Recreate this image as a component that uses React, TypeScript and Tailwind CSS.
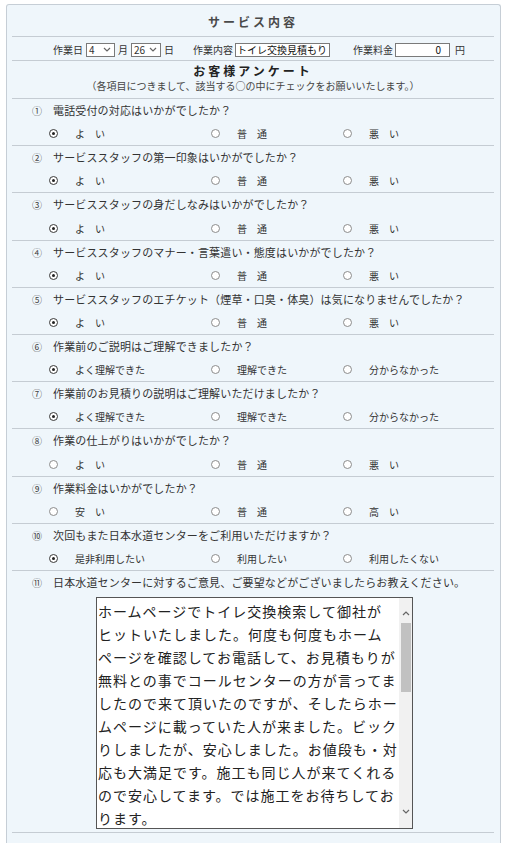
import React from "react";

type Q = {
  no: string;
  q: string;
  opts: string[];
  sel: number;
  tall?: boolean;
};

const yoi = ["よ　い", "普　通", "悪　い"];
const rikai = ["よく理解できた", "理解できた", "分からなかった"];

const questions: Q[] = [
  { no: "①", q: "電話受付の対応はいかがでしたか？", opts: yoi, sel: 0 },
  { no: "②", q: "サービススタッフの第一印象はいかがでしたか？", opts: yoi, sel: 0 },
  { no: "③", q: "サービススタッフの身だしなみはいかがでしたか？", opts: yoi, sel: 0, tall: true },
  { no: "④", q: "サービススタッフのマナー・言葉遣い・態度はいかがでしたか？", opts: yoi, sel: 0 },
  { no: "⑤", q: "サービススタッフのエチケット（煙草・口臭・体臭）は気になりませんでしたか？", opts: yoi, sel: 0 },
  { no: "⑥", q: "作業前のご説明はご理解できましたか？", opts: rikai, sel: 0 },
  { no: "⑦", q: "作業前のお見積りの説明はご理解いただけましたか？", opts: rikai, sel: 0 },
  { no: "⑧", q: "作業の仕上がりはいかがでしたか？", opts: yoi, sel: -1, tall: true },
  { no: "⑨", q: "作業料金はいかがでしたか？", opts: ["安　い", "普　通", "高　い"], sel: -1 },
  {
    no: "⑩",
    q: "次回もまた日本水道センターをご利用いただけますか？",
    opts: ["是非利用したい", "利用したい", "利用したくない"],
    sel: 0,
  },
];

const comment = [
  "ホームページでトイレ交換検索して御社が",
  "ヒットいたしました。何度も何度もホーム",
  "ページを確認してお電話して、お見積もりが",
  "無料との事でコールセンターの方が言ってま",
  "したので来て頂いたのですが、そしたらホー",
  "ムページに載っていた人が来ました。ビック",
  "りしましたが、安心しました。お値段も・対",
  "応も大満足です。施工も同じ人が来てくれる",
  "ので安心してます。では施工をお待ちしてお",
  "ります。",
];

function Radio({ on }: { on: boolean }) {
  return (
    <span
      className={
        on
          ? "flex h-[9px] w-[9px] shrink-0 items-center justify-center rounded-full border border-[#3a3a3a] bg-white"
          : "flex h-[9px] w-[9px] shrink-0 items-center justify-center rounded-full border border-[#8c8c8c] bg-white"
      }
    >
      {on && <span className="h-[3px] w-[3px] rounded-full bg-[#222]" />}
    </span>
  );
}

function Chevron({ up }: { up?: boolean }) {
  return (
    <svg width="8" height="5" viewBox="0 0 8 5" className="block">
      <path
        d={up ? "M1 4 L4 1 L7 4" : "M1 1 L4 4 L7 1"}
        fill="none"
        stroke="#666"
        strokeWidth="1.2"
      />
    </svg>
  );
}

function Select({ value, w }: { value: string; w: string }) {
  return (
    <span
      className={`flex h-[14px] items-center justify-between border border-[#7a7a7a] bg-white pl-[2px] pr-[3px] leading-none ${w}`}
    >
      <span>{value}</span>
      <Chevron />
    </span>
  );
}

export default function App() {
  return (
    <div className="min-h-[843px] bg-white pt-[4px] font-['Noto_Sans_CJK_JP','Noto_Sans',sans-serif] text-[#333]">
      <div className="ml-[6px] w-[495px] rounded-t-[3px] border border-b-0 border-[#c6ced6] bg-[#eff6fb] pl-[5px] pr-[6px]">
        {/* サービス内容 */}
        <div className="flex h-[31px] items-center justify-center pt-[3px] text-[12px] font-bold tracking-[3px] text-[#4a4a4a]">
          サービス内容
        </div>
        <div className="flex h-[24px] items-center border-t border-[#c5ccd3] pl-[41px] pt-[2px] text-[10px] text-[#333]">
          <span>作業日</span>
          <span className="ml-[3px]">
            <Select value="4" w="w-[29px]" />
          </span>
          <span className="ml-[3px]">月</span>
          <span className="ml-[3px]">
            <Select value="26" w="w-[30px]" />
          </span>
          <span className="ml-[3px]">日</span>
          <span className="ml-[19px]">作業内容</span>
          <span className="ml-[2px] flex h-[14px] w-[95px] items-center overflow-hidden border border-[#7a7a7a] bg-white pl-[1px] leading-none text-[#111]">
            トイレ交換見積もり
          </span>
          <span className="ml-[23px]">作業料金</span>
          <span className="ml-[2px] flex h-[14px] w-[55px] items-center justify-end border border-[#7a7a7a] bg-white pr-[8px] leading-none text-[#111]">
            0
          </span>
          <span className="ml-[5px]">円</span>
        </div>

        {/* お客様アンケート */}
        <div className="flex h-[38px] flex-col items-center border-t border-[#c5ccd3] pt-[2px]">
          <div className="text-[12px] font-bold leading-[16px] tracking-[3px] text-[#222]">お客様アンケート</div>
          <div className="text-[10px] leading-[13px] text-[#444]">
            （各項目につきまして、該当する○の中にチェックをお願いいたします。）
          </div>
        </div>

        {questions.map((item) => (
          <div key={item.no} className="border-t border-[#c5ccd3]">
            <div className="flex h-[23px] items-center pl-[20px] text-[11px] tracking-[0.15px]">
              <span className="w-[21px] text-[10px] text-[#444]">{item.no}</span>
              <span>{item.q}</span>
            </div>
            <div
              className={
                item.tall
                  ? "flex h-[24px] items-center pl-[37px] text-[10px] text-[#333]"
                  : "flex h-[23px] items-center pl-[37px] text-[10px] text-[#333]"
              }
            >
              {item.opts.map((o, i) => (
                <div
                  key={o + i}
                  className={
                    i === 0
                      ? "flex w-[162px] items-center"
                      : i === 1
                        ? "flex w-[132px] items-center"
                        : "flex items-center"
                  }
                >
                  <Radio on={item.sel === i} />
                  <span className="ml-[17px]">{o}</span>
                </div>
              ))}
            </div>
          </div>
        ))}

        {/* ⑪ */}
        <div className="border-t border-[#c5ccd3] pb-[3px]">
          <div className="flex h-[23px] items-center pl-[20px] text-[11px] tracking-[0.15px]">
            <span className="w-[21px] text-[10px] text-[#444]">⑪</span>
            <span>日本水道センターに対するご意見、ご要望などがございましたらお教えください。</span>
          </div>
          <div className="ml-[84px] mt-[3px] flex h-[232px] w-[317px] border border-[#555] bg-white">
            <div className="flex-1 overflow-hidden pl-[1px] pt-[2px] text-[14px] leading-[23px] tracking-[1px] text-[#222]">
              {comment.map((line) => (
                <div key={line} className="whitespace-nowrap">
                  {line}
                </div>
              ))}
            </div>
            <div className="flex w-[13px] flex-col bg-[#f1f1f1]">
              <div className="flex h-[25px] items-center justify-center pt-[5px]">
                <Chevron up />
              </div>
              <div className="mx-auto h-[69px] w-[10px] bg-[#c1c1c1]" />
              <div className="flex-1" />
              <div className="flex h-[25px] items-center justify-center pb-[9px]">
                <Chevron />
              </div>
            </div>
          </div>
        </div>
        <div className="h-[12px] border-t border-[#c5ccd3]" />
      </div>
    </div>
  );
}
